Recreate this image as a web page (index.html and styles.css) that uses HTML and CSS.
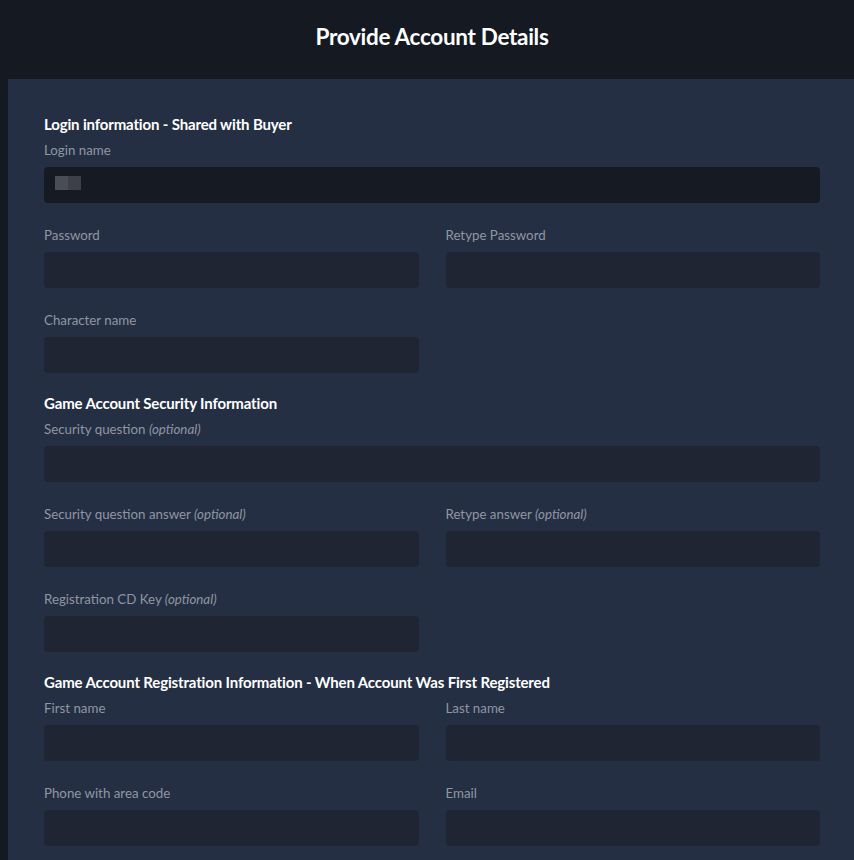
FILE: index.html
```html
<!DOCTYPE html>
<html>
<head>
<meta charset="utf-8">
<link rel="stylesheet" href="styles.css">
</head>
<body>
<header class="top">
  <h1 class="title">Provide Account Details</h1>
</header>
<main class="panel">
  <h2 class="section">Login information - Shared with Buyer</h2>
  <div class="row one">
    <div class="field">
      <label class="label">Login name</label>
      <div class="input dark"><span class="blur"><span class="b1"></span><span class="b2"></span></span></div>
    </div>
  </div>
  <div class="row">
    <div class="field">
      <label class="label">Password</label>
      <div class="input"></div>
    </div>
    <div class="field">
      <label class="label">Retype Password</label>
      <div class="input"></div>
    </div>
  </div>
  <div class="row">
    <div class="field">
      <label class="label">Character name</label>
      <div class="input"></div>
    </div>
  </div>

  <h2 class="section">Game Account Security Information</h2>
  <div class="row one">
    <div class="field">
      <label class="label">Security question <em>(optional)</em></label>
      <div class="input"></div>
    </div>
  </div>
  <div class="row">
    <div class="field">
      <label class="label">Security question answer <em>(optional)</em></label>
      <div class="input"></div>
    </div>
    <div class="field">
      <label class="label">Retype answer <em>(optional)</em></label>
      <div class="input"></div>
    </div>
  </div>
  <div class="row">
    <div class="field">
      <label class="label">Registration CD Key <em>(optional)</em></label>
      <div class="input"></div>
    </div>
  </div>

  <h2 class="section">Game Account Registration Information - When Account Was First Registered</h2>
  <div class="row">
    <div class="field">
      <label class="label">First name</label>
      <div class="input"></div>
    </div>
    <div class="field">
      <label class="label">Last name</label>
      <div class="input"></div>
    </div>
  </div>
  <div class="row">
    <div class="field">
      <label class="label">Phone with area code</label>
      <div class="input"></div>
    </div>
    <div class="field">
      <label class="label">Email</label>
      <div class="input"></div>
    </div>
  </div>
</main>
</body>
</html>
```

FILE: styles.css
```css
html, body {
  margin: 0;
  padding: 0;
  background: #141922;
  height: 100%;
  overflow: hidden;
}
body {
  font-family: Lato, "Open Sans", sans-serif;
}
.top {
  height: 79px;
  display: flex;
  align-items: center;
  justify-content: center;
}
.title {
  margin: 0 0 6px 0;
  color: #ffffff;
  font-size: 22.5px;
  font-weight: 700;
  letter-spacing: -0.3px;
  padding-left: 10px;
}
.panel {
  margin-left: 8px;
  background: #252f43;
  padding: 36px 34px 0 36px;
  height: 781px;
  box-sizing: border-box;
}
.section {
  margin: 0 0 8px 0;
  color: #ffffff;
  font-size: 15px;
  line-height: 18px;
  font-weight: 700;
  letter-spacing: -0.15px;
}
.row {
  display: grid;
  grid-template-columns: 1fr 1fr;
  column-gap: 27px;
}
.row.one {
  grid-template-columns: 1fr;
}
.field {
  margin-bottom: 23px;
}
.row:has(+ .section) .field {
  margin-bottom: 21px;
}
.label {
  display: block;
  color: #8f96a3;
  font-size: 13.3px;
  line-height: 18px;
  margin-bottom: 8px;
}
.label em {
  font-style: italic;
}
.input {
  height: 36px;
  border-radius: 4px;
  background: #1f2533;
  position: relative;
}
.input.dark {
  background: #151a23;
}
.blur {
  position: absolute;
  left: 11px;
  top: 9px;
  display: flex;
  filter: blur(0.6px);
}
.b1 {
  width: 13px;
  height: 14px;
  background: #4a4c57;
}
.b2 {
  width: 13px;
  height: 14px;
  background: #3e4049;
}
```
